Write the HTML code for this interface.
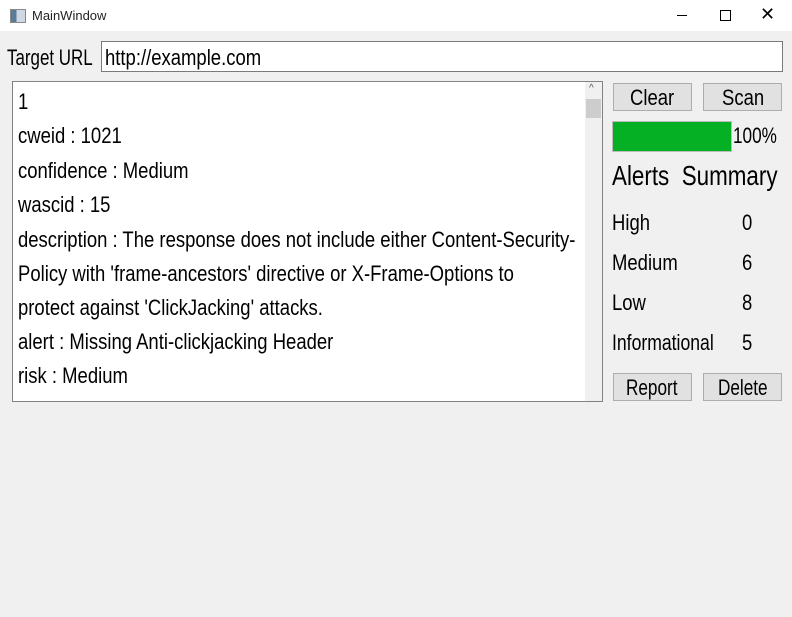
<!DOCTYPE html>
<html><head><style>
body{margin:0;width:792px;height:617px;background:#f0f0f0;position:relative;overflow:hidden;font-family:"Liberation Sans Narrow","Liberation Sans",sans-serif;color:#000}
.t{position:absolute;white-space:nowrap;font-size:22px;line-height:24px;transform:scaleX(0.84);transform-origin:0 0}
.btn{position:absolute;background:#e1e1e1;border:1px solid #adadad;box-sizing:border-box;height:28px}
</style></head><body>
<div style="position:absolute;left:0;top:0;width:792px;height:31px;background:#fff"></div>
<div style="position:absolute;left:10px;top:9px;width:14px;height:12px;border:1px solid #888;background:linear-gradient(90deg,#5a7a9a 40%,#cfd8e0 40%)"></div>
<div style="position:absolute;left:32px;top:8px;font-family:'Liberation Sans',sans-serif;font-size:13px;color:#222">MainWindow</div>
<div style="position:absolute;left:677px;top:15px;width:10px;height:1px;background:#000"></div>
<div style="position:absolute;left:720px;top:10px;width:9px;height:9px;border:1px solid #000"></div>
<div style="position:absolute;left:760px;top:4px;font-family:'Liberation Sans',sans-serif;font-size:18px;font-weight:100">✕</div>
<div class="t" style="left:7px;top:46px;transform:scaleX(0.77)">Target URL</div>
<div style="position:absolute;left:101px;top:41px;width:682px;height:31px;border:1px solid #7a7a7a;background:#fff;box-sizing:border-box"></div>
<div class="t" style="left:105px;top:46px">http://example.com</div>
<div style="position:absolute;left:12px;top:81px;width:591px;height:321px;border:1px solid #828282;background:#fff;box-sizing:border-box"></div>
<div style="position:absolute;left:585px;top:82px;width:17px;height:319px;background:#f0f0f0"></div>
<div style="position:absolute;left:586px;top:99px;width:15px;height:19px;background:#cdcdcd"></div>
<div style="position:absolute;left:589px;top:83px;font-size:10px;color:#555">^</div>
<div class="t" style="left:18px;top:90px">1</div>
<div class="t" style="left:18px;top:124px">cweid : 1021</div>
<div class="t" style="left:18px;top:159px">confidence : Medium</div>
<div class="t" style="left:18px;top:193px">wascid : 15</div>
<div class="t" style="left:18px;top:228px">description : The response does not include either Content-Security-</div>
<div class="t" style="left:18px;top:262px">Policy with 'frame-ancestors' directive or X-Frame-Options to</div>
<div class="t" style="left:18px;top:296px">protect against 'ClickJacking' attacks.</div>
<div class="t" style="left:18px;top:330px">alert : Missing Anti-clickjacking Header</div>
<div class="t" style="left:18px;top:364px">risk : Medium</div>
<div class="btn" style="left:613px;top:83px;width:79px"></div>
<div class="t" style="left:630px;top:86px">Clear</div>
<div class="btn" style="left:703px;top:83px;width:79px"></div>
<div class="t" style="left:722px;top:86px">Scan</div>
<div style="position:absolute;left:612px;top:121px;width:120px;height:31px;border:1px solid #bcbcbc;background:#06b025;box-sizing:border-box"></div>
<div class="t" style="left:733px;top:124px;transform:scaleX(0.78)">100%</div>
<div class="t" style="left:612px;top:161px;font-size:28px;line-height:30px;transform:scaleX(0.8)">Alerts&nbsp; Summary</div>
<div class="t" style="left:612px;top:211px">High</div><div class="t" style="left:742px;top:211px">0</div>
<div class="t" style="left:612px;top:251px">Medium</div><div class="t" style="left:742px;top:251px">6</div>
<div class="t" style="left:612px;top:291px">Low</div><div class="t" style="left:742px;top:291px">8</div>
<div class="t" style="left:612px;top:331px;transform:scaleX(0.8)">Informational</div><div class="t" style="left:742px;top:331px">5</div>
<div class="btn" style="left:613px;top:373px;width:79px"></div>
<div class="t" style="left:626px;top:376px;transform:scaleX(0.78)">Report</div>
<div class="btn" style="left:703px;top:373px;width:79px"></div>
<div class="t" style="left:718px;top:376px;transform:scaleX(0.78)">Delete</div>
</body></html>
